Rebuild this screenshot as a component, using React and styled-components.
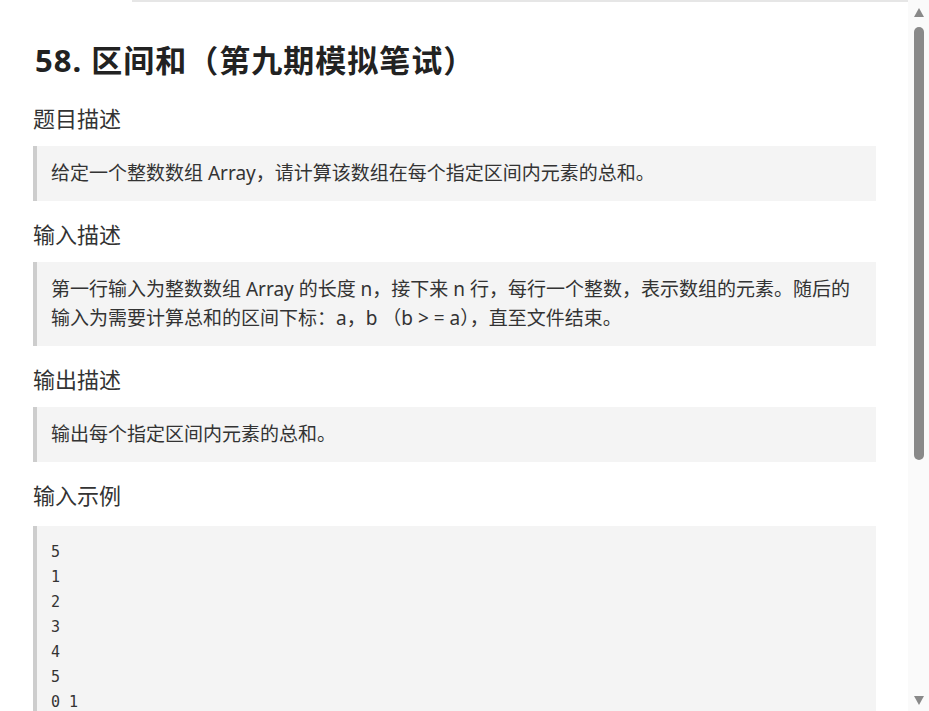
import React from 'react';
import styled, { createGlobalStyle } from 'styled-components';

const GlobalStyle = createGlobalStyle`
  html, body {
    margin: 0;
    padding: 0;
    background: #fff;
    overflow: hidden;
  }
`;

const Page = styled.div`
  display: flex;
  height: 711px;
  background: #fff;
  color: #333;
  font-family: "Noto Sans", "Noto Sans CJK SC", sans-serif;
`;

const Content = styled.div`
  flex: 1;
  min-width: 0;
  overflow: hidden;
`;

/* fake scrollbar rail, since the headless browser hides real ones */
const Rail = styled.div`
  width: 21px;
  flex-shrink: 0;
  display: flex;
  flex-direction: column;
  align-items: center;
  padding: 8px 0 6px;
  box-sizing: border-box;
  background: #fafafa;
`;

const Arrow = styled.div`
  width: 0;
  height: 0;
  border-left: 5px solid transparent;
  border-right: 5px solid transparent;
  ${({ $down }) =>
    $down ? 'border-top: 9px solid #898989;' : 'border-bottom: 9px solid #898989;'}
`;

const Thumb = styled.div`
  width: 10px;
  height: 433px;
  margin-top: 10px;
  border-radius: 5px;
  background: #898989;
`;

const Spacer = styled.div`
  flex: 1;
`;

const TopRule = styled.div`
  height: 2px;
  margin-left: 132px;
  background: #e6e6e6;
`;

const Article = styled.article`
  padding: 38px 32px 120px 33px;
`;

const Title = styled.h1`
  margin: 0 0 23px 2px;
  font-size: 31px;
  line-height: 40px;
  font-weight: 700;
  letter-spacing: 1px;
  color: #222;
`;

const SectionTitle = styled.h3`
  margin: 18px 0 ${({ $after }) => $after || 13}px;
  font-size: 22px;
  line-height: 30px;
  font-weight: 400;
  color: #333;
`;

const Quote = styled.blockquote`
  margin: 0;
  padding: 13px 18px 13px 14px;
  background: #f4f4f4;
  border-left: 4px solid #cdcdcd;
  font-size: 19px;
  line-height: 29px;
  color: #333;
`;

const Code = styled.pre`
  margin: 0;
  padding: 14px 14px 13px;
  background: #f4f4f4;
  border-left: 4px solid #cdcdcd;
  font-family: "DejaVu Sans Mono", "Liberation Mono", monospace;
  font-size: 15px;
  line-height: 25px;
  color: #333;
`;

const sections = [
  { title: '题目描述', body: '给定一个整数数组 Array，请计算该数组在每个指定区间内元素的总和。' },
  {
    title: '输入描述',
    body: '第一行输入为整数数组 Array 的长度 n，接下来 n 行，每行一个整数，表示数组的元素。随后的输入为需要计算总和的区间下标：a，b （b > = a），直至文件结束。',
  },
  { title: '输出描述', body: '输出每个指定区间内元素的总和。' },
];

const samples = [
  { title: '输入示例', code: '5\n1\n2\n3\n4\n5\n0 1\n1 3' },
  { title: '输出示例', code: '3\n9' },
];

export default function App() {
  return (
    <>
      <GlobalStyle />
      <Page>
        <Content>
          <TopRule />
          <Article>
            <Title>58. 区间和（第九期模拟笔试）</Title>
            {sections.map((s) => (
              <section key={s.title}>
                <SectionTitle>{s.title}</SectionTitle>
                <Quote>{s.body}</Quote>
              </section>
            ))}
            {samples.map((s) => (
              <section key={s.title}>
                <SectionTitle $after={16}>{s.title}</SectionTitle>
                <Code>{s.code}</Code>
              </section>
            ))}
          </Article>
        </Content>
        <Rail>
          <Arrow />
          <Thumb />
          <Spacer />
          <Arrow $down />
        </Rail>
      </Page>
    </>
  );
}
